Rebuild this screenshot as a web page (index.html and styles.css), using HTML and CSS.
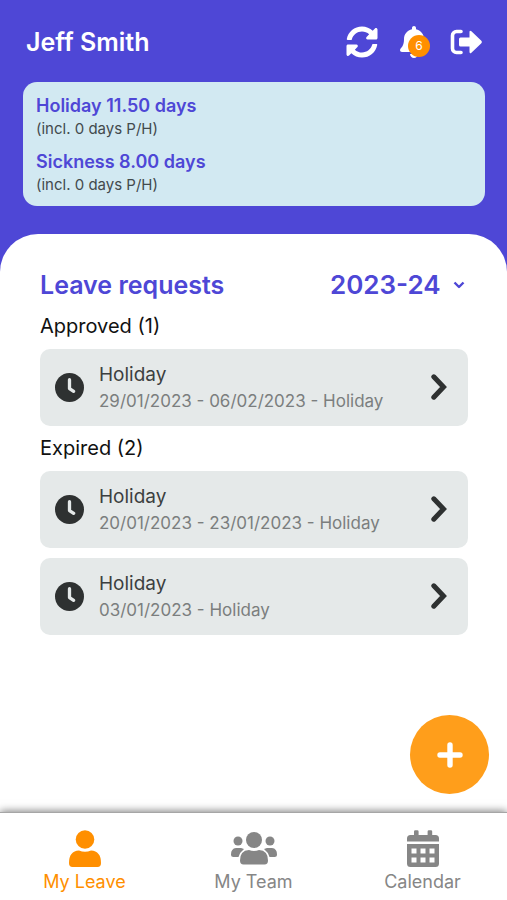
FILE: index.html
```html
<!DOCTYPE html>
<html lang="en">
<head>
<meta charset="utf-8">
<meta name="viewport" content="width=device-width, initial-scale=1">
<title>My Leave</title>
<link rel="stylesheet" href="styles.css">
</head>
<body>
<svg class="symbols" aria-hidden="true">
  <symbol id="clock" viewBox="0 0 28 28">
    <circle cx="14" cy="14" r="14" fill="#2e3131"/>
    <path d="M14 6.500V15l4 2.700" fill="none" stroke="#e5e9e9" stroke-width="3.200" stroke-linecap="round" stroke-linejoin="round"/>
  </symbol>
  <symbol id="chevron" viewBox="0 0 16 26">
    <path d="M2.800 2.800L12.500 13 2.800 23.200" fill="none" stroke="#2e3131" stroke-width="5" stroke-linecap="round" stroke-linejoin="miter"/>
  </symbol>
</svg>

<header class="top">
  <div class="bar">
    <h1 class="name">Jeff Smith</h1>
    <div class="actions">
      <button class="action" type="button" aria-label="Refresh">
        <svg class="icon-refresh" viewBox="0 0 512 512"><path fill="#fff" d="M370.720 133.280C339.458 104.008 298.888 87.962 255.848 88c-77.458.068-144.328 53.178-162.791 126.850-1.344 5.363-6.122 9.150-11.651 9.150H24.103c-7.498 0-13.194-6.807-11.807-14.176C33.933 94.924 134.813 8 256 8c66.448 0 126.791 26.136 171.315 68.685L463.030 40.970C478.149 25.851 504 36.559 504 57.941V192c0 13.255-10.745 24-24 24H345.941c-21.382 0-32.090-25.851-16.971-40.971l41.750-41.749zM32 296h134.059c21.382 0 32.090 25.851 16.971 40.971l-41.750 41.750c31.262 29.273 71.835 45.319 114.876 45.280 77.418-.070 144.315-53.144 162.787-126.849 1.344-5.363 6.122-9.150 11.651-9.150h57.304c7.498 0 13.194 6.807 11.807 14.176C478.067 417.076 377.187 504 256 504c-66.448 0-126.791-26.136-171.315-68.685L48.970 471.030C33.851 486.149 8 475.441 8 454.059V320c0-13.255 10.745-24 24-24z"/></svg>
      </button>
      <button class="action bell" type="button" aria-label="Notifications">
        <svg class="icon-bell" viewBox="0 0 448 512"><path fill="#fff" d="M224 512c35.320 0 63.970-28.650 63.970-64H160.030c0 35.350 28.650 64 63.970 64zm215.390-149.710c-19.320-20.760-55.470-51.990-55.470-154.290 0-77.700-54.480-139.900-127.940-155.160V32c0-17.670-14.320-32-31.980-32s-31.980 14.330-31.980 32v20.840C118.560 68.100 64.080 130.300 64.080 208c0 102.300-36.150 133.530-55.470 154.290-6 6.450-8.660 14.160-8.610 21.710.11 16.400 12.980 32 32.100 32h383.800c19.120 0 32-15.600 32.100-32 .05-7.550-2.610-15.270-8.610-21.710z"/></svg>
        <span class="badge">6</span>
      </button>
      <button class="action" type="button" aria-label="Log out">
        <svg class="icon-logout" viewBox="0 0 32 26">
          <path d="M11 2.500H6.500a4 4 0 0 0-4 4v13a4 4 0 0 0 4 4H11" fill="none" stroke="#fff" stroke-width="3.600" stroke-linecap="round"/>
          <path d="M10.500 8.500h9V3.200q0-2.400 1.900-.9l9.700 9.200q1.500 1.500 0 3l-9.700 9.200q-1.900 1.500-1.900-.9v-5.300h-9q-1.500 0-1.500-1.500v-6q0-1.500 1.500-1.500z" fill="#fff"/>
        </svg>
      </button>
    </div>
  </div>
  <section class="summary" aria-label="Totals">
    <div>
      <p class="total">Holiday 11.50 days</p>
      <p class="note">(incl. 0 days P/H)</p>
    </div>
    <div>
      <p class="total">Sickness 8.00 days</p>
      <p class="note">(incl. 0 days P/H)</p>
    </div>
  </section>
</header>

<main class="panel">
  <div class="heading">
    <h2 class="title">Leave requests</h2>
    <div class="year">
      <select class="year-select" aria-label="Leave year">
        <option>2023-24</option>
      </select>
      <svg class="year-arrow" viewBox="0 0 12 8" aria-hidden="true"><path d="M1.500 1.500L6 6l4.500-4.500" fill="none" stroke="#4e47d6" stroke-width="2.400" stroke-linejoin="round"/></svg>
    </div>
  </div>

  <h3 class="group">Approved (1)</h3>
  <div class="list">
    <a class="card" href="#">
      <svg class="clock"><use href="#clock"/></svg>
      <span class="text"><span class="kind">Holiday</span><span class="dates">29/01/2023 - 06/02/2023 - Holiday</span></span>
      <svg class="chevron"><use href="#chevron"/></svg>
    </a>
  </div>

  <h3 class="group">Expired (2)</h3>
  <div class="list">
    <a class="card" href="#">
      <svg class="clock"><use href="#clock"/></svg>
      <span class="text"><span class="kind">Holiday</span><span class="dates">20/01/2023 - 23/01/2023 - Holiday</span></span>
      <svg class="chevron"><use href="#chevron"/></svg>
    </a>
    <a class="card" href="#">
      <svg class="clock"><use href="#clock"/></svg>
      <span class="text"><span class="kind">Holiday</span><span class="dates">03/01/2023 - Holiday</span></span>
      <svg class="chevron"><use href="#chevron"/></svg>
    </a>
  </div>

  <button class="add" type="button" aria-label="Add leave request">
    <svg class="plus" viewBox="0 0 26 26"><path d="M13 3v20M3 13h20" fill="none" stroke="#fff" stroke-width="5.400" stroke-linecap="round"/></svg>
  </button>
</main>

<nav class="tabs">
  <a class="tab active" href="#">
    <svg class="tab-icon" viewBox="0 0 48 38" fill="currentColor"><circle cx="24" cy="9.500" r="9.300"/><path d="M8 33q0-12 10-12.500q6 2.500 12 0q10 .5 10 12.500q0 4-3.500 4h-25q-3.500 0-3.500-4z"/></svg>
    <span>My Leave</span>
  </a>
  <a class="tab" href="#">
    <svg class="tab-icon" viewBox="0 0 48 38" fill="currentColor"><circle cx="24" cy="10" r="8"/><circle cx="8" cy="11" r="4.500"/><circle cx="40" cy="11" r="4.500"/><path d="M10 30.500q0-10 9-10.500q5 2 10 0q9 .5 9 10.500q0 4-3.500 4h-21q-3.500 0-3.500-4z"/><path d="M1 24.500q0-6 5-6.500h5l3 1q-4 3-5.500 8h-5q-2.500 0-2.500-2.500zM47 24.500q0-6-5-6.500h-5l-3 1q4 3 5.500 8h5q2.500 0 2.500-2.500z"/></svg>
    <span>My Team</span>
  </a>
  <a class="tab" href="#">
    <svg class="tab-icon" viewBox="0 0 48 38" fill="currentColor"><path d="M8 11.500V8.500q0-3.500 3.500-3.500H15V1.500q0-1.300 1.300-1.300h2q1.300 0 1.300 1.300V5h9V1.500q0-1.300 1.300-1.300h2q1.300 0 1.300 1.300V5h3.300q3.500 0 3.500 3.500v3z"/><path fill-rule="evenodd" d="M8 14h32v19.500q0 3.500-3.500 3.500h-25q-3.500 0-3.500-3.500zM12.500 18.500v5h5v-5zM21.500 18.500v5h5v-5zM30.500 18.500v5h5v-5zM12.500 27.500v5h5v-5zM21.500 27.500v5h5v-5zM30.500 27.500v5h5v-5z"/></svg>
    <span>Calendar</span>
  </a>
</nav>
</body>
</html>
```
FILE: styles.css
```css
* { box-sizing: border-box; }

body {
  margin: 0;
  min-height: 100vh;
  display: flex;
  flex-direction: column;
  background: #4e47d6;
  font-family: Inter, "Liberation Sans", sans-serif;
}

h1, h2, h3, p { margin: 0; font-weight: 400; }
button { padding: 0; border: 0; background: none; font-family: inherit; }
a { color: inherit; text-decoration: none; }
svg { display: block; flex: none; }
.symbols { position: absolute; width: 0; height: 0; }

.top { padding: 0 22px 28px 23px; }
.bar {
  height: 82px;
  padding: 1px 3px 0;
  display: flex;
  align-items: center;
  justify-content: space-between;
}
.name { font-size: 25px; font-weight: 600; color: #fff; }
.actions { display: flex; align-items: center; gap: 22px; }
.action { position: relative; }
.icon-refresh { width: 32px; height: 32px; }
.icon-bell { width: 28px; height: 32px; }
.icon-logout { width: 32px; height: 26px; }
.badge {
  position: absolute;
  left: 8px;
  top: 9px;
  width: 22px;
  height: 22px;
  border-radius: 50%;
  background: #ff8f00;
  color: #fff;
  font-size: 12px;
  line-height: 22px;
  text-align: center;
}

.summary {
  display: grid;
  gap: 10px;
  padding: 12px 13px 10px;
  border-radius: 14px;
  background: #d2e9f2;
  line-height: 23px;
}
.total { font-size: 18px; font-weight: 600; color: #4e47d6; }
.note { font-size: 15px; color: #434a4d; }

.panel {
  flex: 1;
  position: relative;
  padding: 31px 39px 20px 40px;
  border-radius: 38px 38px 0 0;
  background: #fff;
}
.heading { display: flex; justify-content: space-between; align-items: center; height: 39px; color: #4e47d6; }
.title { font-size: 25px; font-weight: 600; }
.year { display: grid; align-items: center; }
.year-select {
  grid-area: 1 / 1;
  appearance: none;
  border: 0;
  margin: 0;
  padding: 0 27px 0 0;
  background: none;
  color: inherit;
  font-family: inherit;
  font-size: 26px;
  font-weight: 600;
}
.year-arrow { grid-area: 1 / 1; justify-self: end; width: 12px; height: 8px; margin-right: 3px; pointer-events: none; }

.group { font-size: 20px; line-height: 45px; color: #111; }
.list { display: grid; gap: 10px; }
.card {
  display: flex;
  align-items: center;
  gap: 15px;
  padding: 12px 21px 13px 15px;
  border-radius: 10px;
  background: #e5e9e9;
}
.text { flex: 1; display: grid; }
.kind { font-size: 19px; line-height: 28px; color: #3c3f40; }
.dates { font-size: 17px; line-height: 24px; color: #7b7e7e; }
.clock { width: 29px; height: 29px; }
.chevron { width: 16px; height: 26px; }

.add {
  position: absolute;
  right: 18px;
  bottom: 18px;
  width: 79px;
  height: 79px;
  border-radius: 50%;
  background: #ff9e1b;
  display: grid;
  place-items: center;
}
.plus { width: 26px; height: 26px; }

.tabs {
  display: grid;
  grid-template-columns: repeat(3, 1fr);
  padding: 17px 0 5px;
  background: #fff;
  border-top: 1px solid #a6a6a6;
  box-shadow: 0 -1px 8px rgba(0, 0, 0, 0.5);
  position: relative;
}
.tab {
  display: grid;
  justify-items: center;
  gap: 1px;
  color: #868686;
  font-size: 18px;
  line-height: 26px;
}
.tab.active { color: #ff8f00; }
.tab-icon { width: 48px; height: 38px; }
```
